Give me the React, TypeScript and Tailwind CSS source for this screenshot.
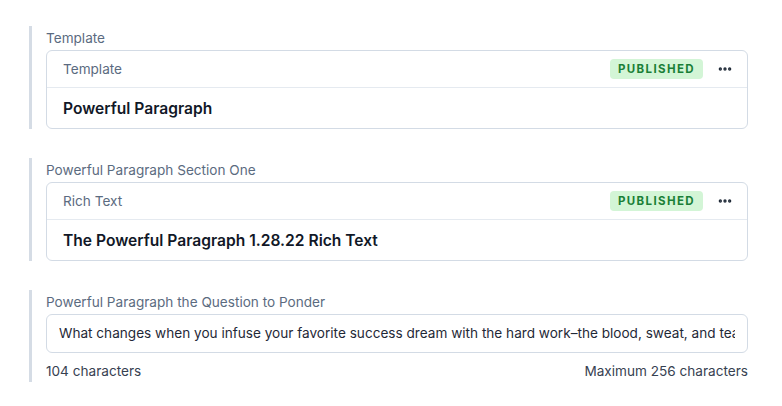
import { MoreHorizontal } from "lucide-react";

function Badge() {
  return (
    <span className="rounded bg-[#d3f5d6] px-[8px] py-[2px] text-[11.5px] font-bold tracking-[0.12em] text-[#1a7f37] leading-[16px]">
      PUBLISHED
    </span>
  );
}

function EntryCard({ label, type, title }: { label: string; type: string; title: string }) {
  return (
    <div className="flex">
      <div className="w-[3px] bg-[#d5dce5]" />
      <div className="flex-1 pl-[14px]">
        <div className="h-[24px] text-[13.6px] leading-[24px] text-[#5b6b80]">{label}</div>
        <div className="rounded-md border border-[#d3dbe5] bg-white">
          <div className="flex h-[37px] items-center justify-between border-b border-[#e5eaf0] pl-4 pr-[14px]">
            <span className="text-[13.6px] text-[#5b6b80]">{type}</span>
            <div className="flex items-center gap-[14px]">
              <Badge />
              <MoreHorizontal size={16} strokeWidth={3} className="text-[#1f2937]" />
            </div>
          </div>
          <div className="flex h-[40px] items-center px-4 pt-[2px] text-[15.6px] font-semibold text-[#111827]">
            {title}
          </div>
        </div>
      </div>
    </div>
  );
}

export default function App() {
  return (
    <div
      className="min-h-screen bg-white pl-[29px] pr-[34px] pt-[26px]"
      style={{ fontFamily: "Inter, 'Noto Sans', sans-serif" }}
    >
      <div className="flex flex-col gap-[29px]">
        <EntryCard label="Template" type="Template" title="Powerful Paragraph" />
        <EntryCard
          label="Powerful Paragraph Section One"
          type="Rich Text"
          title="The Powerful Paragraph 1.28.22 Rich Text"
        />
        <div className="flex">
          <div className="w-[3px] bg-[#d5dce5]" />
          <div className="min-w-0 flex-1 pl-[14px]">
            <div className="h-[24px] text-[13.6px] leading-[24px] text-[#5b6b80]">
              Powerful Paragraph the Question to Ponder
            </div>
            <div className="flex h-[39px] items-center overflow-hidden rounded-md border border-[#d3dbe5] px-3">
              <span className="min-w-0 flex-1 overflow-hidden whitespace-nowrap text-[13.6px] text-[#1f2937]">
                What changes when you infuse your favorite success dream with the hard work–the blood, sweat, and tears–of getting there?
              </span>
            </div>
            <div className="flex h-[29px] items-end justify-between pb-[1px] text-[13.6px] text-[#374151]">
              <span>104 characters</span>
              <span>Maximum 256 characters</span>
            </div>
          </div>
        </div>
      </div>
    </div>
  );
}
